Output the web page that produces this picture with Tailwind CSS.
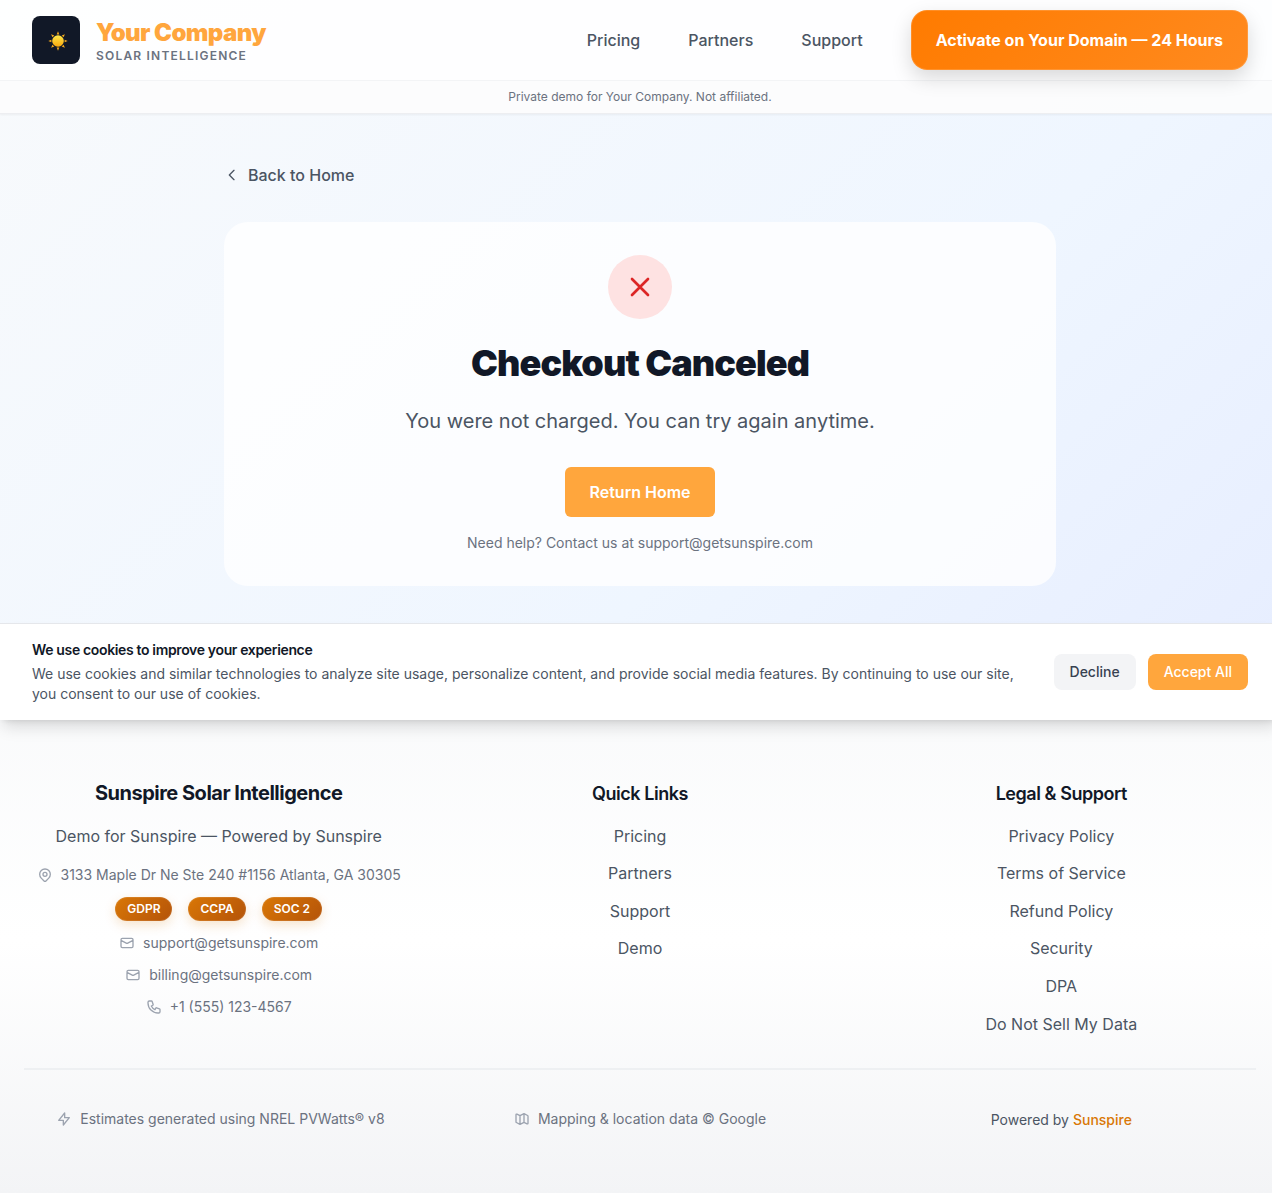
<!DOCTYPE html>
<html lang="en">
<head>
<meta charset="utf-8">
<title>Checkout Canceled</title>
<script src="https://cdn.jsdelivr.net/npm/@tailwindcss/browser@4"></script>
</head>
<body class="h-[1193px] overflow-hidden font-['Inter',sans-serif] antialiased text-[#111827]">
<svg class="hidden">
  <symbol id="mail" viewBox="0 0 24 24"><path d="M3 8l7.89 4.26a2 2 0 002.22 0L21 8M5 19h14a2 2 0 002-2V7a2 2 0 00-2-2H5a2 2 0 00-2 2v10a2 2 0 002 2z"/></symbol>
</svg>
<div class="relative flex h-[1193px] w-[1280px] flex-col bg-[linear-gradient(to_bottom_right,#f8fafc,#eff6ff,#e0e7ff)]">
  <div class="h-[689px] shrink-0">
    <header class="h-[114px] border-b border-[#e5e7eb]/70 bg-white/90 shadow-[0_1px_2px_rgba(0,0,0,0.05)]">
      <div class="flex h-20 items-center justify-between pr-8 pl-8">
        <div class="flex items-center gap-4">
          <div class="flex size-12 items-center justify-center rounded-lg bg-[#111827]">
            <svg class="mt-0.5 ml-[3px] size-5" viewBox="0 0 20 20">
              <defs><linearGradient id="sun" x1="0" y1="0" x2="0" y2="1"><stop offset="0" stop-color="#ffe94a"/><stop offset="1" stop-color="#f9a70d"/></linearGradient></defs>
              <g fill="#f5a81c"><path id="ray" d="M10 .3 11.3 3.4H8.7z"/><use href="#ray" transform="rotate(45 10 10)"/><use href="#ray" transform="rotate(90 10 10)"/><use href="#ray" transform="rotate(135 10 10)"/><use href="#ray" transform="rotate(180 10 10)"/><use href="#ray" transform="rotate(225 10 10)"/><use href="#ray" transform="rotate(270 10 10)"/><use href="#ray" transform="rotate(315 10 10)"/></g>
              <circle cx="10" cy="10" r="5.8" fill="url(#sun)"/>
            </svg>
          </div>
          <div>
            <div class="text-2xl leading-8 font-black tracking-tight text-[#ffa63d]">Your Company</div>
            <div class="-mt-px text-xs leading-4 font-semibold tracking-widest text-[#6b7280]">SOLAR INTELLIGENCE</div>
          </div>
        </div>
        <nav class="flex items-center gap-12 text-base font-medium text-[#4b5563]">
          <a>Pricing</a><a>Partners</a><a>Support</a>
          <a class="flex h-[60px] w-[337.4px] items-center justify-center rounded-2xl border border-white/15 bg-[linear-gradient(135deg,#ff7b00,#ff8a1f)] bg-origin-border font-bold text-white shadow-[0_8px_20px_rgba(0,0,0,0.15)]">Activate on Your Domain — 24 Hours</a>
        </nav>
      </div>
      <div class="flex h-[33px] items-center justify-center border-t border-[#f3f4f6] bg-[#f9fafb]/50 text-xs text-[#6b7280]">Private demo for Your Company. Not affiliated.</div>
    </header>
    <main class="mx-auto w-[832px] pt-[49px]">
      <a class="flex h-6 items-center gap-2 text-base font-medium text-[#4b5563]">
        <svg class="size-4" viewBox="0 0 24 24" fill="none" stroke="currentColor" stroke-width="2" stroke-linecap="round" stroke-linejoin="round"><path d="M15 19l-7-7 7-7"/></svg>
        Back to Home
      </a>
      <section class="mt-[35px] flex h-[364px] flex-col items-center rounded-3xl bg-white/80 pt-[33px]">
        <div class="flex size-16 items-center justify-center rounded-full bg-[#fee2e2]">
          <svg class="size-8" viewBox="0 0 24 24" fill="none" stroke="#dc2626" stroke-width="2" stroke-linecap="round" stroke-linejoin="round"><path d="M6 18L18 6M6 6l12 12"/></svg>
        </div>
        <h1 class="mt-6 text-4xl leading-10 font-black tracking-tight">Checkout Canceled</h1>
        <p class="mt-6 text-xl leading-7 text-[#4b5563]">You were not charged. You can try again anytime.</p>
        <a class="mt-8 flex h-[50px] w-[150px] items-center justify-center rounded-md bg-[#ffa63d] text-base font-semibold text-white">Return Home</a>
        <p class="mt-4 text-sm text-[#6b7280]">Need help? Contact us at support@getsunspire.com</p>
      </section>
    </main>
  </div>

  <footer class="h-[504px] bg-[linear-gradient(to_bottom,#f9fafb,#ffffff,#f3f4f6)] px-6 pt-[91px]">
    <div class="grid h-[288px] grid-cols-3 gap-8 text-center text-base text-[#4b5563]">
      <div class="-mt-px flex flex-col items-center">
        <h3 class="text-xl leading-7 font-bold tracking-tight text-[#111827]">Sunspire Solar Intelligence</h3>
        <p class="mt-[17px] leading-6">Demo for Sunspire — Powered by Sunspire</p>
        <div class="mt-[17px] flex items-center gap-2 text-sm text-[#6b7280]">
          <svg class="size-4 text-[#9ca3af]" viewBox="0 0 24 24" fill="none" stroke="currentColor" stroke-width="2" stroke-linecap="round" stroke-linejoin="round"><path d="M17.657 16.657L13.414 20.9a1.998 1.998 0 01-2.827 0l-4.244-4.243a8 8 0 1111.314 0z"/><path d="M15 11a3 3 0 11-6 0 3 3 0 016 0z"/></svg>
          3133 Maple Dr Ne Ste 240 #1156 Atlanta, GA 30305
        </div>
        <div class="mt-[11.5px] flex gap-4 text-xs font-semibold text-white">
          <span class="flex h-6 items-center rounded-full border border-white/10 bg-[linear-gradient(135deg,#d97706,#b45309)] bg-origin-border px-[11px] shadow-[0_4px_12px_rgba(217,119,6,0.2)]">GDPR</span>
          <span class="flex h-6 items-center rounded-full border border-white/10 bg-[linear-gradient(135deg,#d97706,#b45309)] bg-origin-border px-[11px] shadow-[0_4px_12px_rgba(217,119,6,0.2)]">CCPA</span>
          <span class="flex h-6 items-center rounded-full border border-white/10 bg-[linear-gradient(135deg,#d97706,#b45309)] bg-origin-border px-[11px] shadow-[0_4px_12px_rgba(217,119,6,0.2)]">SOC 2</span>
        </div>
        <div class="mt-[12.5px] flex flex-col items-center gap-3 text-sm text-[#6b7280]">
          <div class="flex items-center gap-2"><svg class="size-4 text-[#9ca3af]" fill="none" stroke="currentColor" stroke-width="2" stroke-linecap="round" stroke-linejoin="round"><use href="#mail"/></svg>support@getsunspire.com</div>
          <div class="flex items-center gap-2"><svg class="size-4 text-[#9ca3af]" fill="none" stroke="currentColor" stroke-width="2" stroke-linecap="round" stroke-linejoin="round"><use href="#mail"/></svg>billing@getsunspire.com</div>
          <div class="flex items-center gap-2"><svg class="size-4 text-[#9ca3af]" viewBox="0 0 24 24" fill="none" stroke="currentColor" stroke-width="2" stroke-linecap="round" stroke-linejoin="round"><path d="M3 5a2 2 0 012-2h3.28a1 1 0 01.948.684l1.498 4.493a1 1 0 01-.502 1.21l-2.257 1.13a11.042 11.042 0 005.516 5.516l1.13-2.257a1 1 0 011.21-.502l4.493 1.498a1 1 0 01.684.949V19a2 2 0 01-2 2h-1C9.716 21 3 14.284 3 6V5z"/></svg>+1 (555) 123-4567</div>
        </div>
      </div>
      <div>
        <h4 class="text-lg leading-7 font-semibold tracking-tight text-[#111827]">Quick Links</h4>
        <ul class="mt-[15.7px] flex flex-col gap-[13.6px] leading-6"><li>Pricing</li><li>Partners</li><li>Support</li><li>Demo</li></ul>
      </div>
      <div>
        <h4 class="text-lg leading-7 font-semibold tracking-tight text-[#111827]">Legal &amp; Support</h4>
        <ul class="mt-[15.7px] flex flex-col gap-[13.6px] leading-6"><li>Privacy Policy</li><li>Terms of Service</li><li>Refund Policy</li><li>Security</li><li>DPA</li><li>Do Not Sell My Data</li></ul>
      </div>
    </div>
    <div class="grid grid-cols-3 items-start gap-8 border-t-2 border-[#eef0f2] pt-[39px] text-sm text-[#6b7280]">
      <div class="flex items-center justify-center gap-2 pl-[3.5px]"><svg class="size-4 text-[#9ca3af]" viewBox="0 0 24 24" fill="none" stroke="currentColor" stroke-width="2" stroke-linecap="round" stroke-linejoin="round"><path d="M13 10V3L4 14h7v7l9-11h-7z"/></svg>Estimates generated using NREL PVWatts® v8</div>
      <div class="flex items-center justify-center gap-2"><svg class="size-4 text-[#9ca3af]" viewBox="0 0 24 24" fill="none" stroke="currentColor" stroke-width="2" stroke-linecap="round" stroke-linejoin="round"><path d="M9 20l-5.447-2.724A1 1 0 013 16.382V5.618a1 1 0 011.447-.894L9 7m0 13l6-3m-6 3V7m6 10l4.553 2.276A1 1 0 0021 18.382V7.618a1 1 0 00-.553-.894L15 4m0 13V4m0 0L9 7"/></svg>Mapping &amp; location data © Google</div>
      <div class="pt-px text-center text-[#4b5563]">Powered by <span class="font-medium text-[#d97706]">Sunspire</span></div>
    </div>
  </footer>

  <div class="absolute top-[623px] left-0 flex h-[97px] w-[1280px] items-center justify-between border-t border-[#e5e7eb] bg-white px-8 shadow-[0_10px_15px_-3px_rgba(0,0,0,0.13),0_4px_6px_-4px_rgba(0,0,0,0.12)]">
    <div class="w-[990px]">
      <h3 class="mb-1 text-sm leading-5 font-semibold tracking-tight">We use cookies to improve your experience</h3>
      <p class="text-sm leading-5 text-[#4b5563]">We use cookies and similar technologies to analyze site usage, personalize content, and provide social media features. By continuing to use our site, you consent to our use of cookies.</p>
    </div>
    <div class="flex gap-3 text-sm font-medium">
      <button class="h-9 rounded-lg bg-[#f3f4f6] px-4 text-[#374151]">Decline</button>
      <button class="h-9 rounded-lg bg-[#ffa63d] px-4 text-white">Accept All</button>
    </div>
  </div>
</div>
</body>
</html>
